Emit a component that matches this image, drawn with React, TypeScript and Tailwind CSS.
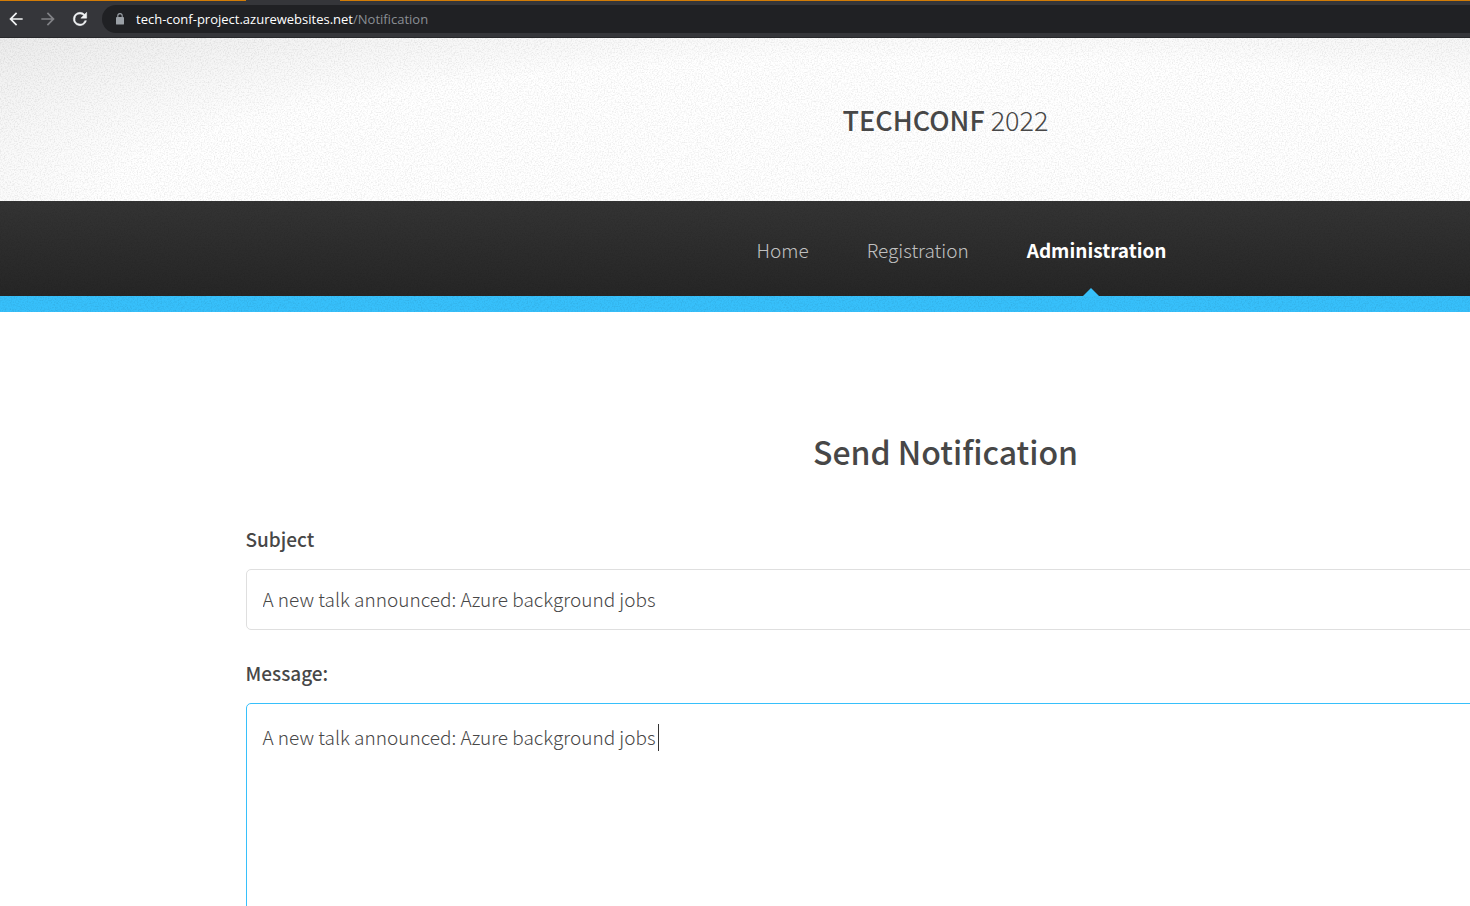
import React, { useId } from "react";

function Grain({ className }: { className: string }) {
  const id = useId();
  return (
    <svg aria-hidden="true" className={"pointer-events-none absolute inset-0 h-full w-full " + className}>
      <filter id={id} x="0" y="0" width="100%" height="100%">
        <feTurbulence type="fractalNoise" baseFrequency="0.7" numOctaves="2" stitchTiles="stitch" />
        <feColorMatrix values="0 0 0 0 0  0 0 0 0 0  0 0 0 0 0  1.8 0 0 0 -0.75" />
      </filter>
      <rect width="100%" height="100%" filter={`url(#${id})`} />
    </svg>
  );
}

function BrowserBar() {
  return (
    <div className="shrink-0 bg-[#35363a]">
      <div className="flex h-px bg-[#d27c07]">
        <span className="ml-[246px] w-[94px] bg-[#35363a]" />
      </div>
      <div className="flex h-[37px] items-center border-b border-[#27282b]">
        <div className="flex w-[102px] shrink-0 items-center gap-2 pl-1">
          <button type="button" aria-label="Back" className="flex size-6 items-center justify-center">
            <svg viewBox="0 0 24 24" className="size-5" fill="#f1f3f4">
              <path d="M20 11H7.83l5.59-5.59L12 4l-8 8 8 8 1.41-1.41L7.83 13H20v-2z" />
            </svg>
          </button>
          <button type="button" aria-label="Forward" className="flex size-6 items-center justify-center">
            <svg viewBox="0 0 24 24" className="size-5" fill="#818286">
              <path d="M12 4l-1.41 1.41L16.17 11H4v2h12.17l-5.58 5.59L12 20l8-8z" />
            </svg>
          </button>
          <button type="button" aria-label="Reload" className="flex size-6 items-center justify-center">
            <svg viewBox="0 0 24 24" className="size-5" fill="#f1f3f4" stroke="#f1f3f4" strokeWidth="0.6">
              <path d="M17.65 6.35A7.96 7.96 0 0 0 12 4a8 8 0 1 0 7.73 10h-2.08A6 6 0 1 1 12 6c1.66 0 3.14.69 4.22 1.78L13 11h7V4l-2.35 2.35z" />
            </svg>
          </button>
        </div>
        <div className="flex h-7 flex-1 items-center gap-[11px] rounded-l-full bg-[#202124] pl-[13px]">
          <svg viewBox="0 0 10 12" className="h-3 w-[10px]">
            <rect x="1" y="4" width="8" height="7.6" rx="0.9" fill="#9aa0a6" />
            <path d="M2.8 4.5V2.8a2.2 2.2 0 0 1 4.4 0v1.7" fill="none" stroke="#9aa0a6" strokeWidth="1.1" />
          </svg>
          <p className="font-['Open_Sans',sans-serif] text-[13px] leading-5 text-white">
            tech-conf-project.azurewebsites.net<span className="text-[#8b8f94]">/Notification</span>
          </p>
        </div>
      </div>
    </div>
  );
}

export default function App() {
  return (
    <div className="flex h-screen flex-col overflow-hidden bg-white">
      <BrowserBar />
      <div className="min-h-0 flex-1 overflow-hidden">
        <div className="min-w-[1891px] font-['Noto_Sans_CJK_SC',sans-serif] font-light text-[#474747]">
          <header className="relative flex h-[163px] items-center justify-center bg-[radial-gradient(ellipse_at_50%_100%,#ffffff_0%,#ffffff_62%,#ececec_100%)]">
            <Grain className="opacity-10" />
            <h1 className="relative text-[27px] leading-10">
              <strong className="font-medium">TECHCONF</strong> 2022
            </h1>
          </header>

          <nav className="relative h-[95px] bg-linear-to-b from-[#343434] to-[#262626]">
            <Grain className="opacity-10" />
            <ul className="relative flex h-full items-center justify-center gap-[58px] pl-[32px] text-[19px] leading-7 text-[#c0c0c0]">
              <li className="pt-0.5"><a href="#home">Home</a></li>
              <li className="pt-0.5"><a href="#registration">Registration</a></li>
              <li className="relative flex h-full items-center pt-0.5 font-bold text-white">
                <a href="#administration" aria-current="page">Administration</a>
                <svg viewBox="0 0 16 8" className="absolute bottom-0 left-14 h-2 w-4" fill="#37c0fb">
                  <path d="M0 8 8 0l8 8z" />
                </svg>
              </li>
            </ul>
          </nav>
          <div className="relative h-4 bg-[#37c0fb]">
            <Grain className="opacity-10" />
          </div>

          <main className="mx-auto w-[1400px] pt-[114px]">
            <h2 className="text-center text-[32px] leading-[50px] font-medium">Send Notification</h2>
            <form className="mt-[47px] text-[19px]">
              <label htmlFor="subject" className="block leading-8 font-medium">Subject</label>
              <input
                id="subject"
                type="text"
                defaultValue="A new talk announced: Azure background jobs"
                className="mt-[14px] block h-[61px] w-full rounded-[5px] border border-[#dfdfdf] px-4 pb-0.5 outline-none"
              />
              <label htmlFor="message" className="mt-[27px] block leading-8 font-medium">Message:</label>
              <div className="relative mt-[14px]">
                <textarea
                  id="message"
                  defaultValue="A new talk announced: Azure background jobs"
                  className="block h-[300px] w-full resize-none rounded-[5px] border border-[#37c0fb] px-4 py-[19px] leading-7 outline-none"
                />
                <span aria-hidden="true" className="absolute top-[21px] left-[412px] h-[27px] w-px bg-[#333333]" />
              </div>
            </form>
          </main>
        </div>
      </div>
    </div>
  );
}
